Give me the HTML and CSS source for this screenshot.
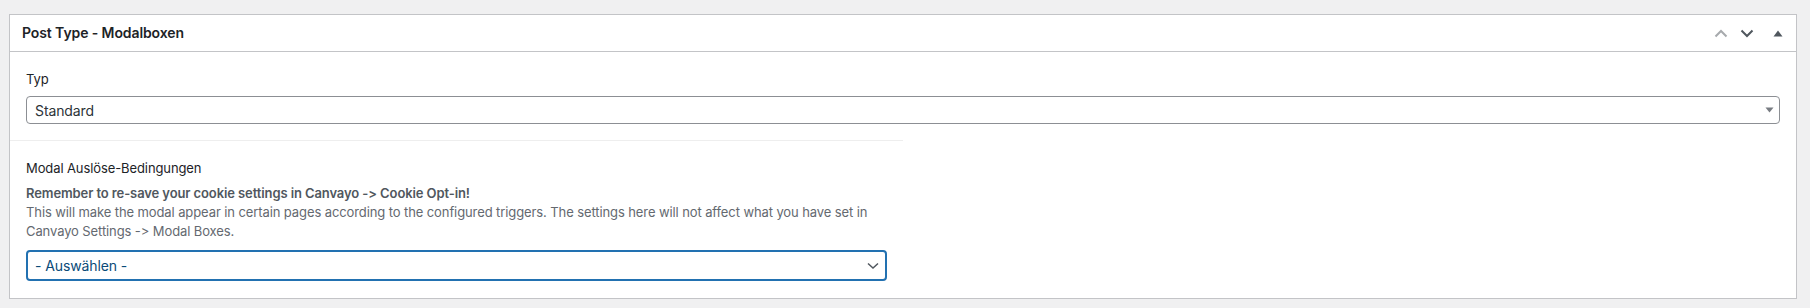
FILE: index.html
```html
<!DOCTYPE html>
<html lang="de">
<head>
<meta charset="utf-8">
<link rel="stylesheet" href="styles.css">
</head>
<body>
<div class="wrap">
  <div class="postbox">
    <div class="postbox-header">
      <h2 class="title">Post Type - Modalboxen</h2>
      <div class="handles">
        <span class="handle up"><svg width="14" height="9" viewBox="0 0 14 9"><path d="M1.5 7.5 L7 2 L12.5 7.5" fill="none" stroke="currentColor" stroke-width="2"/></svg></span>
        <span class="handle down"><svg width="14" height="9" viewBox="0 0 14 9"><path d="M1.5 1.5 L7 7 L12.5 1.5" fill="none" stroke="currentColor" stroke-width="2"/></svg></span>
        <span class="handle toggle"><svg width="10" height="7" viewBox="0 0 10 7"><path d="M5 0.5 L9.5 6.5 L0.5 6.5 Z" fill="currentColor"/></svg></span>
      </div>
    </div>
    <div class="inside">
      <div class="field">
        <div class="label">Typ</div>
        <div class="select">
          <span class="value">Standard</span>
          <svg class="caret" width="9" height="6" viewBox="0 0 9 6"><path d="M0.5 0.5 L8.5 0.5 L4.5 5.5 Z" fill="currentColor"/></svg>
        </div>
      </div>
      <div class="field half">
        <div class="label">Modal Auslöse-Bedingungen</div>
        <p class="desc"><strong>Remember to re-save your cookie settings in Canvayo -&gt; Cookie Opt-in!</strong><br>This will make the modal appear in certain pages according to the configured triggers. The settings here will not affect what you have set in Canvayo Settings -&gt; Modal Boxes.</p>
        <div class="select focus">
          <span class="value">- Auswählen -</span>
          <svg class="chev" width="12" height="8" viewBox="0 0 12 8"><path d="M1 1.5 L6 6 L11 1.5" fill="none" stroke="currentColor" stroke-width="1.5"/></svg>
        </div>
      </div>
    </div>
  </div>
</div>
</body>
</html>
```
FILE: styles.css
```css
* { box-sizing: border-box; }
html, body { margin: 0; padding: 0; }
body {
  background: #f0f0f1;
  font-family: "Inter", "Liberation Sans", sans-serif;
  font-feature-settings: "calt" 0, "liga" 0;
  font-variant-ligatures: none;
  font-size: 13px;
  letter-spacing: -0.1px;
  color: #1d2327;
  width: 1810px;
  height: 308px;
  overflow: hidden;
}
.wrap { padding: 14px 13px 0 9px; }
.postbox {
  background: #fff;
  border: 1px solid #c3c4c7;
  height: 285px;
}
.postbox-header {
  height: 37px;
  border-bottom: 1px solid #c3c4c7;
  display: flex;
  align-items: center;
  justify-content: space-between;
  padding: 0 0 0 12px;
}
.title {
  margin: 0;
  font-size: 14px;
  font-weight: 600;
  line-height: 1.4;
  color: #1d2327;
}
.handles { display: flex; align-items: center; }
.handle { display: flex; align-items: center; justify-content: center; }
.handle.up { width: 26px; color: #a7aaad; }
.handle.down { width: 26px; color: #50575e; }
.handle.toggle { width: 36px; color: #50575e; }
.field { padding: 18px 16px 16px; }
.field.half { width: 50%; border-top: 1px solid #eeeeee; padding-top: 18px; padding-bottom: 15px; }
.label {
  font-size: 13px;
  line-height: 18px;
  color: #1d2327;
  margin-bottom: 8px;
}
.desc {
  margin: -1px 0 9px;
  font-size: 13px;
  line-height: 19px;
  color: #646970;
}
.desc strong { color: #50575e; font-weight: 600; }
.select {
  display: flex;
  align-items: center;
  justify-content: space-between;
  height: 28px;
  border: 1px solid #8c8f94;
  border-radius: 4px;
  padding: 0 5px 0 8px;
  font-size: 14px;
  color: #2c3338;
  background: #fff;
}
.select .caret { color: #787c82; }
.select.focus {
  height: 31px;
  border: 2px solid #2271b1;
  color: #0a4b78;
  padding: 0 6px 0 7px;
}
.select .chev { color: #50575e; }
```
